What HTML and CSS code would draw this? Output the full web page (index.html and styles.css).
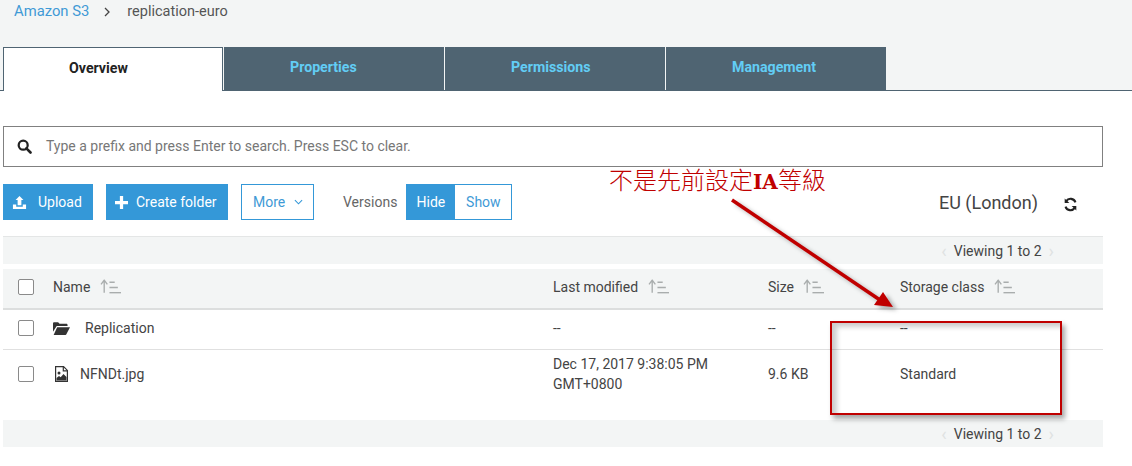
FILE: index.html
```html
<!DOCTYPE html>
<html lang="en">
  <head>
    <meta charset="UTF-8" />
    <meta name="viewport" content="width=device-width, initial-scale=1.0" />
    <title>replication-euro - S3</title>
    <link rel="stylesheet" href="styles.css">
  </head>

  <body>
    <header class="top">
      <div class="crumbs">
        <a class="crumb-link">Amazon S3</a>
        <svg class="crumb-sep" viewBox="0 0 6 10"><path d="M1 1l4 4-4 4" fill="none" stroke="#444" stroke-width="1.300"/></svg>
        <span>replication-euro</span>
      </div>
      <nav class="tabs">
        <button class="tab valgt">Overview</button>
        <button class="tab">Properties</button>
        <button class="tab">Permissions</button>
        <button class="tab">Management</button>
      </nav>
    </header>

    <main class="content">
      <div class="search">
        <svg class="search-icon" viewBox="0 0 16 16"><circle cx="6.600" cy="6.600" r="4.800" fill="none" stroke="#222" stroke-width="2.400"/><path d="M10 10l4.400 4.400" stroke="#222" stroke-width="2.800" stroke-linecap="round"/></svg>
        <span>Type a prefix and press Enter to search. Press ESC to clear.</span>
      </div>

      <div class="toolbar">
        <button class="btn btn-blue btn-upload">
          <svg class="btn-icon" viewBox="0 0 16 16"><path d="M8 1l4.200 4.400H10V11H6V5.400H3.800z" fill="#fff"/><path d="M1 10h3.500v2.500h7V10H15v5H1z" fill="#fff"/></svg>
          Upload
        </button>
        <button class="btn btn-blue btn-create">
          <svg class="plus-icon" viewBox="0 0 12 12"><path d="M4.500 0h3v4.500H12v3H7.500V12h-3V7.500H0v-3h4.500z" fill="#fff"/></svg>
          Create folder
        </button>
        <button class="btn btn-line btn-more">
          More
          <svg class="chev" viewBox="0 0 10 6"><path d="M1 1l4 4 4-4" fill="none" stroke="#3498d8" stroke-width="1.200"/></svg>
        </button>
        <span class="versions">Versions</span>
        <button class="btn btn-blue btn-hide">Hide</button>
        <button class="btn btn-line btn-show">Show</button>
        <span class="region">EU (London)</span>
        <svg class="refresh" viewBox="0 0 16 16"><path d="M13.300 5.800A5.600 5.600 0 0 0 3.400 4.300" fill="none" stroke="#222" stroke-width="2.200"/><path d="M1.800 1.500v5h5z" fill="#222"/><path d="M2.700 10.200a5.600 5.600 0 0 0 9.900 1.500" fill="none" stroke="#222" stroke-width="2.200"/><path d="M14.200 14.500v-5h-5z" fill="#222"/></svg>
      </div>

      <div class="pager pager-top">
        <span class="pager-arrow">&lsaquo;</span>
        <span>Viewing 1 to 2</span>
        <span class="pager-arrow">&rsaquo;</span>
      </div>

      <div class="row row-head">
        <span class="check"></span>
        <span class="cell">Name <svg class="sort" viewBox="0 0 20 14"><use href="#sort-icon"/></svg></span>
        <span class="cell">Last modified <svg class="sort" viewBox="0 0 20 14"><use href="#sort-icon"/></svg></span>
        <span class="cell">Size <svg class="sort" viewBox="0 0 20 14"><use href="#sort-icon"/></svg></span>
        <span class="cell">Storage class <svg class="sort" viewBox="0 0 20 14"><use href="#sort-icon"/></svg></span>
      </div>

      <div class="row row-folder">
        <span class="check"></span>
        <span class="cell name">
          <svg class="folder" viewBox="0 0 16 12"><path d="M0 1.200C0 .5.500 0 1.200 0h3.600l1.400 1.500h6.300c.7 0 1.200.5 1.200 1.200v1H3.500L0 9z" fill="#333"/><path d="M3.900 4.800H16l-3.300 6.400c-.2.500-.6.800-1.100.8H.6z" fill="#333"/></svg>
          Replication
        </span>
        <span class="cell">--</span>
        <span class="cell">--</span>
        <span class="cell">--</span>
      </div>

      <div class="row row-file">
        <span class="check"></span>
        <span class="cell name">
          <svg class="file" viewBox="0 0 13 16"><path d="M.6.600h8l3.800 3.800v11H.6z" fill="none" stroke="#333" stroke-width="1.200"/><path d="M8.300.6v4.200h4.100" fill="none" stroke="#333" stroke-width="1.200"/><circle cx="4" cy="7" r="1.500" fill="#333"/><path d="M1.500 14.500v-2.500l2.500-2 1.700 1.300L8.500 8l3 3v3.500z" fill="#333"/></svg>
          NFNDt.jpg
        </span>
        <span class="cell">Dec 17, 2017 9:38:05 PM<br />GMT+0800</span>
        <span class="cell">9.6 KB</span>
        <span class="cell">Standard</span>
      </div>

      <div class="pager pager-bottom">
        <span class="pager-arrow">&lsaquo;</span>
        <span>Viewing 1 to 2</span>
        <span class="pager-arrow">&rsaquo;</span>
      </div>
    </main>

    <!-- annotation on top of the screenshot -->
    <p class="note">不是先前設定<b>IA</b>等級</p>
    <svg class="arrow" viewBox="0 0 180 130" width="180" height="130">
      <path d="M2 2L150 102" stroke="#c00000" stroke-width="3.500"/>
      <path d="M163 109L144 107L153 94z" fill="#c00000"/>
    </svg>
    <div class="mark"></div>

    <svg class="defs" width="0" height="0">
      <symbol id="sort-icon" viewBox="0 0 20 14">
        <path d="M4 13V2M1 5l3-4 3 4" fill="none" stroke="#a9adad" stroke-width="1.300"/>
        <path d="M9 3h5M9 8h8M9 13h11" fill="none" stroke="#a9adad" stroke-width="1.500"/>
      </symbol>
    </svg>
  </body>
</html>
```

FILE: styles.css
```css
* {
  box-sizing: border-box;
}

body {
  margin: 0;
  background-color: white;
  color: #444;
  font-family: Roboto, "Noto Sans", sans-serif;
  font-size: 14px;
  overflow: hidden;
}

button {
  font-family: inherit;
}

.top {
  height: 91px;
  padding-left: 3px;
  background-color: #f3f5f5;
  border-bottom: 1px solid #4f6472;
}

.crumbs {
  display: flex;
  height: 47px;
  padding: 3px 0 0 11px;
  font-size: 14.500px;
  color: #555;
}

.crumb-link {
  color: #3f9ad6;
  font-size: 14.800px;
  line-height: 17px;
}

.crumb-sep {
  width: 6px;
  height: 10px;
  margin: 4px 17px 0 15px;
}

.tabs {
  display: flex;
  height: 44px;
}

.tab {
  width: 220px;
  height: 43px;
  margin-right: 1px;
  padding: 0 0 3px 66px;
  border: 0;
  background-color: #4f6472;
  color: #62cdf5;
  font-size: 14.200px;
  font-weight: 700;
  text-align: left;
}

.tab.valgt {
  height: 44px;
  padding: 0 0 3px 65px;
  border: 1px solid #4f6472;
  border-bottom: 0;
  background-color: white;
  color: #222;
}

.content {
  padding: 35px 29px 0 3px;
}

.search {
  display: flex;
  align-items: center;
  height: 41px;
  padding: 0 0 1px 13px;
  border: 1px solid #808080;
  color: #777;
  font-size: 14px;
}

.search-icon {
  width: 15px;
  height: 15px;
  margin-right: 14px;
}

.toolbar {
  display: flex;
  align-items: center;
  height: 36px;
  margin-top: 17px;
}

.btn {
  display: flex;
  align-items: center;
  height: 36px;
  padding: 0;
  font-size: 14px;
}

.btn-blue {
  border: 0;
  background-color: #3498d8;
  color: white;
}

.btn-line {
  border: 1px solid #3498d8;
  background-color: white;
  color: #3f9ad6;
}

.btn-upload {
  width: 90px;
  padding-left: 9px;
}

.btn-icon {
  width: 15px;
  height: 15px;
  margin-right: 11px;
}

.btn-create {
  width: 122px;
  margin-left: 13px;
  padding-left: 9px;
}

.plus-icon {
  width: 13px;
  height: 13px;
  margin-right: 8px;
}

.btn-more {
  width: 73px;
  margin-left: 13px;
  padding-left: 11px;
}

.chev {
  width: 9px;
  height: 6px;
  margin-left: 9px;
}

.versions {
  margin-left: 29px;
  margin-right: 9px;
  color: #666;
  font-size: 14px;
}

.btn-hide {
  width: 49px;
  justify-content: center;
}

.btn-show {
  width: 57px;
  justify-content: center;
  border-left: 0;
}

.region {
  margin-left: auto;
  margin-right: 25px;
  color: #444;
  font-size: 18px;
}

.refresh {
  width: 15px;
  height: 15px;
  margin-right: 25px;
  margin-top: 4px;
}

.pager {
  display: flex;
  justify-content: flex-end;
  align-items: center;
  gap: 7px;
  padding-right: 49px;
  background-color: #f3f5f5;
  color: #444;
  font-size: 14px;
}

.pager-top {
  height: 28px;
  margin-top: 16px;
  border-top: 1px solid #e4e6e6;
}

.pager-bottom {
  height: 27px;
}

.pager-arrow {
  color: #dfe2e2;
  font-size: 18px;
}

.row {
  display: grid;
  grid-template-columns: 35px 500px 215px 132px 1fr;
  align-items: center;
  padding-left: 15px;
  color: #444;
}

.row-head {
  height: 41px;
  margin-top: 5px;
  padding-bottom: 3px;
  background-color: #f3f5f5;
  border-bottom: 2px solid #dcdede;
}

.row-folder {
  height: 40px;
  padding-bottom: 3px;
  border-bottom: 1px solid #e0e0e0;
}

.row-file {
  height: 70px;
  line-height: 20px;
}

.row-file .check,
.row-file .cell {
  align-self: start;
  margin-top: 14px;
}

.row-file .check {
  margin-top: 16px;
}

.row-file .cell:nth-child(3) {
  margin-top: 4px;
}

.check {
  width: 16px;
  height: 16px;
  border: 1px solid #8a8a8a;
  border-radius: 2px;
  background-color: white;
}

.cell {
  display: block;
}

.sort {
  width: 21px;
  height: 15px;
  margin-left: 6px;
  vertical-align: -2px;
}

.name {
  display: flex;
  align-items: center;
}

.folder {
  width: 17px;
  height: 13px;
  margin-right: 15px;
}

.file {
  width: 13px;
  height: 16px;
  margin: 0 12px 0 2px;
}

.defs {
  position: absolute;
}

/* annotation layer */
.note {
  position: absolute;
  left: 609px;
  top: 161px;
  margin: 0;
  color: #c00000;
  font-family: "Noto Sans CJK TC", sans-serif;
  font-size: 24px;
  font-weight: 300;
}

.note b {
  font-family: "DejaVu Serif", serif;
  font-size: 20px;
  font-weight: 700;
}

.arrow {
  position: absolute;
  left: 730px;
  top: 198px;
  filter: drop-shadow(4px 3px 2px rgba(0, 0, 0, 0.3));
}

.mark {
  position: absolute;
  left: 830px;
  top: 321px;
  width: 232px;
  height: 94px;
  border: 2px solid #c00000;
  box-shadow: 3px 4px 5px rgba(0, 0, 0, 0.35), inset 5px 4px 5px rgba(0, 0, 0, 0.2);
}
```
